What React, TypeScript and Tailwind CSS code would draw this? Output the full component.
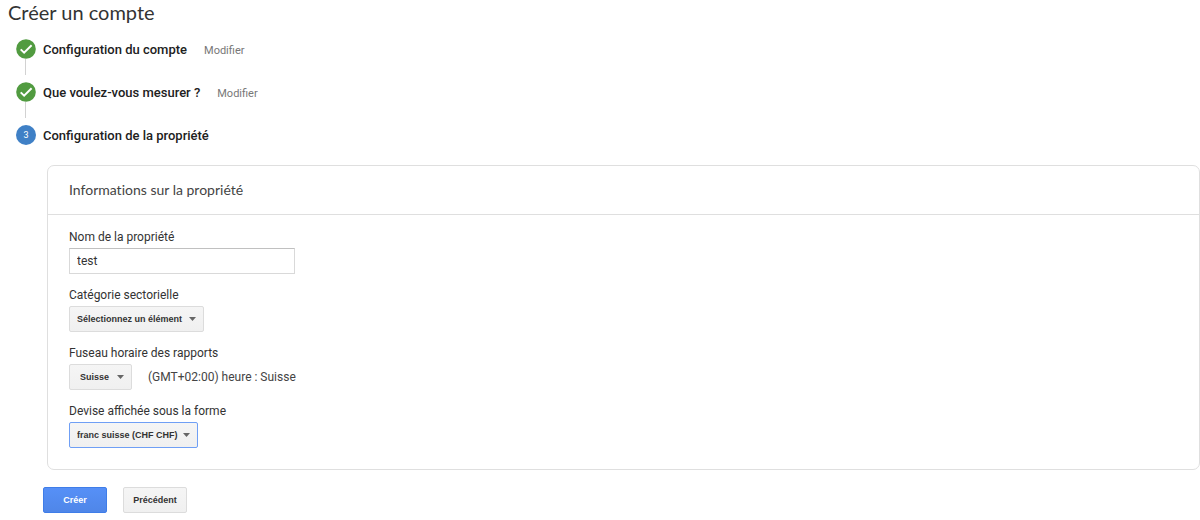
import type { ReactNode, SelectHTMLAttributes } from "react";

const labelClass = "block text-[12px] leading-[20px] text-[#333]";

const controlText = "pt-[2px] font-['Liberation_Sans',sans-serif] text-[9px] font-bold";

function StepBadge({ done, index }: { done?: boolean; index: number }) {
  if (!done) {
    return (
      <span className="flex size-5 shrink-0 items-center justify-center rounded-full bg-[#3f80c6] pt-px text-[9px] text-white">
        {index}
      </span>
    );
  }
  return (
    <svg viewBox="0 0 20 20" className="size-5 shrink-0" aria-hidden="true">
      <circle cx="10" cy="10" r="9.8" fill="#519b40" />
      <path d="M4.7 10.4 8.1 13.7 15.6 6.3" fill="none" stroke="#fff" strokeWidth="2" />
    </svg>
  );
}

function Step({ index, title, done }: { index: number; title: string; done?: boolean }) {
  return (
    <li>
      <div className="flex h-5 items-center">
        <StepBadge index={index} done={done} />
        <h2 className="ml-[7px] pt-px text-[13px] leading-[18px] font-medium text-[#212121]">{title}</h2>
        {done && (
          <a href="#" className="ml-[17px] pt-[3px] text-[11px] leading-[18px] text-[#777]">
            Modifier
          </a>
        )}
      </div>
      {done && <div className="mb-[7px] ml-[9px] h-4 w-px bg-[#d2d2d2]" />}
    </li>
  );
}

function Field({ id, label, children }: { id: string; label: string; children: ReactNode }) {
  return (
    <div>
      <label htmlFor={id} className={labelClass}>
        {label}
      </label>
      <div className="mt-px flex h-[26px] items-center">{children}</div>
    </div>
  );
}

function Select({ className, ...props }: SelectHTMLAttributes<HTMLSelectElement>) {
  return (
    <span className="relative inline-flex">
      <select
        {...props}
        className={`h-[26px] appearance-none rounded-[2px] border bg-linear-to-b from-[#f5f5f5] to-[#f0f0f0] text-[#333] outline-none ${controlText} ${className}`}
      />
      <svg
        viewBox="0 0 7 4"
        className="pointer-events-none absolute top-[11px] right-2 h-1 w-[7px]"
        aria-hidden="true"
      >
        <path d="M0 0h7L3.5 4z" fill="#666" />
      </svg>
    </span>
  );
}

export default function App() {
  return (
    <main className="min-h-screen bg-white pb-1 font-['Roboto','Liberation_Sans',sans-serif]">
      <h1 className="pl-2 font-['Lato','Roboto',sans-serif] text-[20px] leading-[24px] text-[#333]">
        Créer un compte
      </h1>

      <ol className="mt-[15px] pl-4">
        <Step index={1} title="Configuration du compte" done />
        <Step index={2} title="Que voulez-vous mesurer ?" done />
        <Step index={3} title="Configuration de la propriété" />
      </ol>

      <form onSubmit={(e) => e.preventDefault()}>
        <section className="mt-5 ml-[47px] rounded-[7px] border border-[#dfdfdf]">
          <h3 className="flex h-[49px] items-center border-b border-[#dfdfdf] pb-[2px] pl-[21px] font-['Lato','Roboto',sans-serif] text-[14px] text-[#444] [font-variant-ligatures:none]">
            Informations sur la propriété
          </h3>
          <div className="flex flex-col gap-[11px] px-[21px] pt-3 pb-[21px]">
            <Field id="name" label="Nom de la propriété">
              <input
                id="name"
                type="text"
                defaultValue="test"
                className="h-[26px] w-[226px] border border-[#d9d9d9] border-t-[#c0c0c0] px-[7px] text-[12px] text-[#333] outline-none"
              />
            </Field>
            <Field id="category" label="Catégorie sectorielle">
              <Select id="category" className="w-[135px] border-[#dcdcdc] pl-[7px]">
                <option>Sélectionnez un élément</option>
              </Select>
            </Field>
            <Field id="timezone" label="Fuseau horaire des rapports">
              <Select id="timezone" className="w-[63px] border-[#dcdcdc] pl-[10px]">
                <option>Suisse</option>
              </Select>
              <span className="ml-4 text-[12px] text-[#444]">(GMT+02:00) heure : Suisse</span>
            </Field>
            <Field id="currency" label="Devise affichée sous la forme">
              <Select id="currency" className="w-[129px] border-[#6f9ff5] pl-[7px]">
                <option>franc suisse (CHF CHF)</option>
              </Select>
            </Field>
          </div>
        </section>

        <div className="mt-[17px] ml-[43px] flex gap-4">
          <button
            type="submit"
            className={`h-[26px] w-16 rounded-[2px] border border-[#3f7de8] bg-linear-to-b from-[#5690f7] to-[#4f86e8] text-white ${controlText}`}
          >
            Créer
          </button>
          <button
            type="button"
            className={`h-[26px] w-16 rounded-[2px] border border-[#dcdcdc] bg-linear-to-b from-[#f5f5f5] to-[#f0f0f0] text-[#333] ${controlText}`}
          >
            Précédent
          </button>
        </div>
      </form>
    </main>
  );
}
